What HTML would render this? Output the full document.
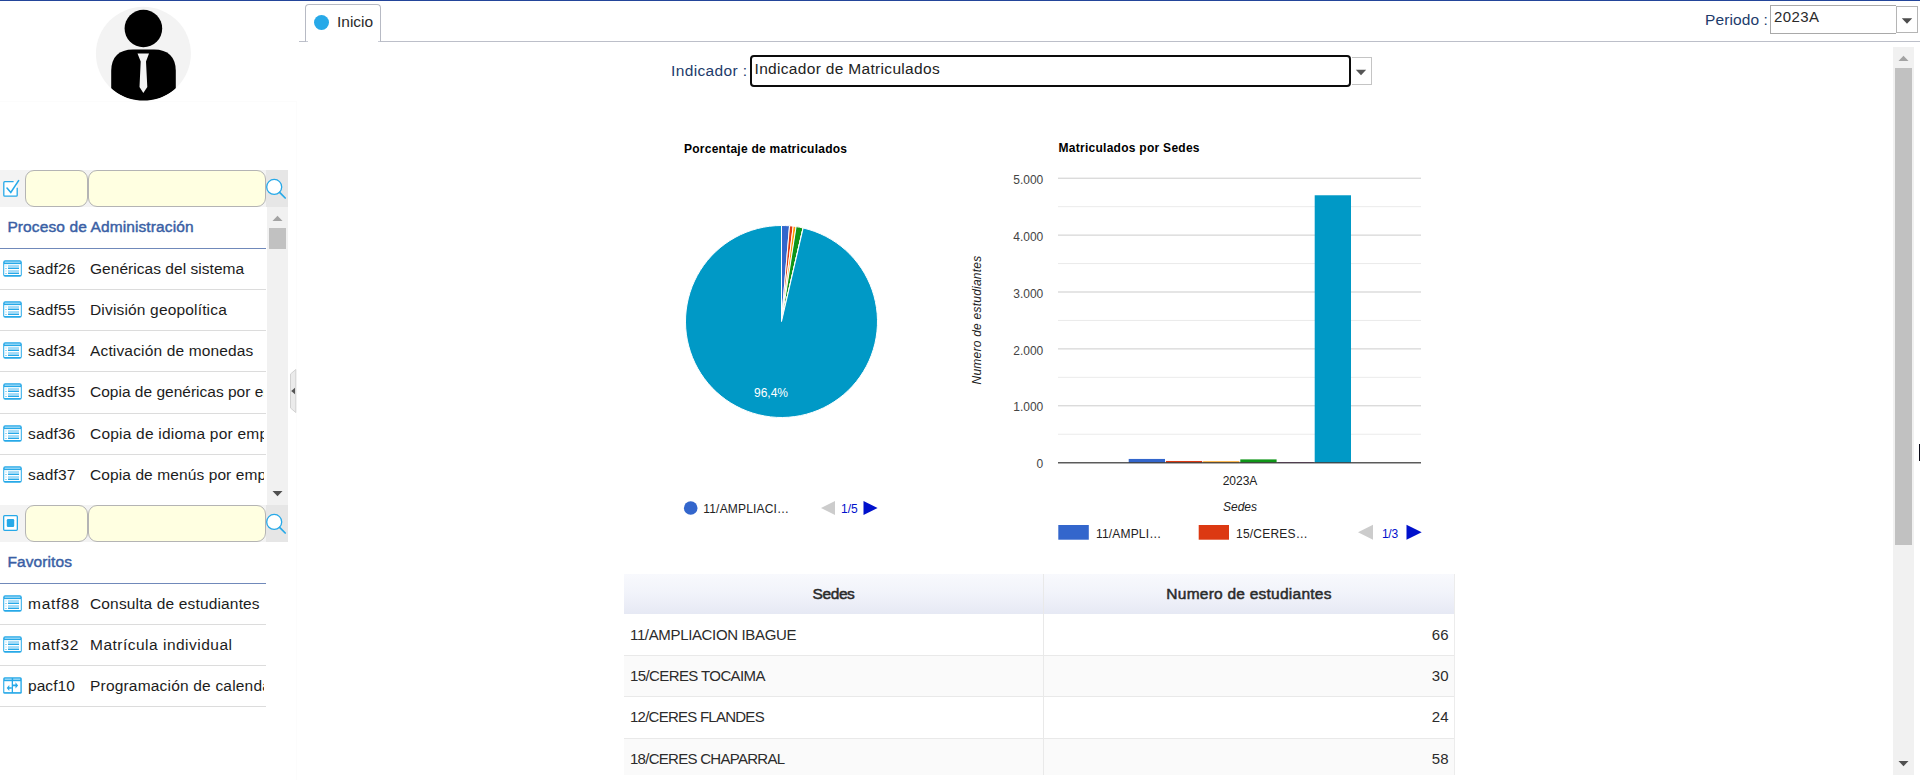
<!DOCTYPE html>
<html lang="es">
<head>
<meta charset="utf-8">
<title>Inicio</title>
<style>
*{box-sizing:border-box;margin:0;padding:0}
html,body{width:1920px;height:780px;overflow:hidden;background:#fff}
body{position:relative;font-family:"Liberation Sans",sans-serif;color:#222;font-size:16px}
.abs{position:absolute}
.t{position:absolute;white-space:nowrap;line-height:20px}
.topline{left:0;top:0;width:1920px;height:1px;background:#23459a}
.tb{left:0;width:288px;height:37px;background:#f3f3f3}
.inp{position:absolute;top:0;height:37px;background:#ffffe1;border:1px solid #b4b4b4;border-radius:9px}
.hdr{left:7.4px;color:#3a5fa5;font-size:15.5px;-webkit-text-stroke:.45px #3a5fa5;letter-spacing:.11px}
.hline{left:0;width:266px;height:1px;background:#7089ba}
.row{left:0;width:266px;height:41px;border-bottom:1px solid #dcdcdc;overflow:hidden;white-space:nowrap}
.row .ic{position:absolute;left:3px;top:11px;width:19px;height:17px}
.row .cd{position:absolute;left:28px;top:10px;font-size:15.5px;line-height:20px;color:#1c1c1c;letter-spacing:.15px}
.row .nm{position:absolute;left:90px;top:10px;width:174.3px;overflow:hidden;font-size:15.5px;line-height:20px;color:#1c1c1c;letter-spacing:.07px}
.sbv{background:#f1f1f1}
.thumb{background:#c1c1c1}
.th{height:40px;line-height:40px;text-align:center;font-size:15.5px;color:#2b2b2b;white-space:nowrap;-webkit-text-stroke:.5px #2b2b2b}
.tr{left:624px;width:831px;height:41px;border-bottom:1px solid #e9e9e9;white-space:nowrap;font-size:15px;color:#2b2b2b}
.tr .c1{position:absolute;left:6px;top:11px;line-height:20px}
.tr .c2{position:absolute;right:6px;top:11px;line-height:20px;letter-spacing:.3px}
</style>
</head>
<body>
<div class="abs topline"></div>

<!-- avatar -->
<svg class="abs" style="left:95px;top:5px" width="98" height="98" viewBox="0 0 98 98">
  <defs><linearGradient id="gb" x1="0" y1="0" x2="0" y2="1"><stop offset="0" stop-color="#8dd2f5"/><stop offset=".58" stop-color="#b5e2f9"/><stop offset=".72" stop-color="#27a9e8"/><stop offset="1" stop-color="#27a9e8"/></linearGradient><clipPath id="cp"><circle cx="48.5" cy="48.5" r="47.5"/></clipPath></defs>
  <ellipse cx="48.4" cy="48.8" rx="47.5" ry="47" fill="#f3f3f3"/>
  <g clip-path="url(#cp)">
    <circle cx="48.4" cy="23.5" r="18.8" fill="#000"/>
    <path d="M16.2 84 V66 C16.2 52 24 44.6 38 44.6 H59 C73 44.6 80.8 52 80.8 66 V84 C70 93 58 95.6 48.5 95.6 C39 95.6 27 93 16.2 84 Z" fill="#000"/>
    <path d="M42.5 48.5 H54 L51 56.5 L52.3 82 L48.3 88 L44.5 82 L45.7 56.5 Z" fill="#f3f3f3"/>
  </g>
</svg>

<!-- tab strip -->
<div class="abs" style="left:299px;top:41px;width:1621px;height:1px;background:#bcbfc9"></div>
<div class="abs" style="left:305px;top:4px;width:76px;height:38px;border:1px solid #b7bac4;border-bottom:none;border-radius:4px 4px 0 0;background:#fff"></div>
<div class="abs" style="left:306px;top:41px;width:2px;height:1px;background:#c9ccd6"></div><div class="abs" style="left:378px;top:41px;width:2px;height:1px;background:#c9ccd6"></div>
<div class="abs" style="left:314.2px;top:15px;width:15.3px;height:15.3px;border-radius:50%;background:#27a9e8"></div>
<div class="t" style="left:337px;top:12px;font-size:15.5px;color:#2a2a2a">Inicio</div>

<!-- periodo -->
<div class="t" style="left:1705px;top:10px;font-size:15.5px;color:#1d3b6b;letter-spacing:.1px">Periodo :</div>
<div class="abs" style="left:1896px;top:6px;width:22px;height:27px;border:1px solid #b5b5b5;background:#fff"></div>
<div class="abs" style="left:1770px;top:5px;width:126px;height:29px;border:1px solid #a9a9a9;border-right:none;background:#fff"></div>
<div class="t" style="left:1774px;top:7px;font-size:15px;color:#2a2a2a;letter-spacing:.4px">2023A</div>
<svg class="abs" style="left:1901px;top:18px" width="12" height="7" viewBox="0 0 12 7"><path d="M0.8 0.3 H11.2 L6 5.8 Z" fill="#4d4d4d"/></svg>

<!-- left panel -->
<div class="abs" style="left:0;top:101px;width:297px;height:1px;background:#fcfcfc"></div><div class="abs" style="left:296px;top:101px;width:1px;height:679px;background:#fcfcfc"></div>
<div class="abs tb" style="top:170px"><div class="inp" style="left:25px;width:63px"></div><div class="inp" style="left:88px;width:178px"></div><svg class="abs" style="left:2px;top:8px" width="20" height="20" viewBox="0 0 20 20"><rect x="1.8" y="3.7" width="13.4" height="14.5" rx="1" fill="#fff"/><path d="M15.2 9.7 V17.2 Q15.2 18.2 14.2 18.2 H2.8 Q1.8 18.2 1.8 17.2 V4.7 Q1.8 3.7 2.8 3.7 H11.6" fill="none" stroke="#27a9e8" stroke-width="1.3"/><path d="M5 10 L8.8 14.4 L16.6 2.6" fill="none" stroke="#27a9e8" stroke-width="1.6" stroke-linecap="round"/></svg><div class="abs" style="left:266px;top:0;width:22px;height:37px;background:#e6e6e6"></div><svg class="abs" style="left:265px;top:8px" width="23" height="23" viewBox="0 0 23 23"><circle cx="9.2" cy="8.9" r="7.5" fill="#fff" stroke="#27a9e8" stroke-width="1.3"/><path d="M14.6 14.3 L20.2 20" stroke="#27a9e8" stroke-width="1.7" stroke-linecap="round"/></svg></div>
<div class="t hdr" style="top:217px">Proceso de Administración</div>
<div class="abs hline" style="top:248px"></div>
<div class="abs row" style="top:249px;height:41px"><svg class="ic" viewBox="0 0 19 17"><rect x="0.2" y="0.2" width="18.6" height="16.6" rx="2" fill="#27a9e8"/><rect x="1.7" y="1.5" width="15.6" height="1.4" fill="#9ad8f6"/><rect x="1.2" y="4.1" width="16.6" height="10.9" fill="#fff"/><g fill="url(#gb)"><rect x="5" y="5.2" width="11" height="3.8"/><rect x="5" y="10.2" width="11" height="3.8"/></g><g fill="#cdebfa"><rect x="2.1" y="5.4" width="1.8" height="1.2"/><rect x="2.1" y="10.4" width="1.8" height="1.2"/></g><g fill="#8fd3f4"><rect x="2.1" y="8" width="1.8" height="1"/><rect x="2.1" y="13" width="1.8" height="1"/></g></svg><span class="cd" style="letter-spacing:0.15px">sadf26</span><span class="nm" style="letter-spacing:0.04px">Genéricas del sistema</span></div>
<div class="abs row" style="top:290px;height:41px"><svg class="ic" viewBox="0 0 19 17"><rect x="0.2" y="0.2" width="18.6" height="16.6" rx="2" fill="#27a9e8"/><rect x="1.7" y="1.5" width="15.6" height="1.4" fill="#9ad8f6"/><rect x="1.2" y="4.1" width="16.6" height="10.9" fill="#fff"/><g fill="url(#gb)"><rect x="5" y="5.2" width="11" height="3.8"/><rect x="5" y="10.2" width="11" height="3.8"/></g><g fill="#cdebfa"><rect x="2.1" y="5.4" width="1.8" height="1.2"/><rect x="2.1" y="10.4" width="1.8" height="1.2"/></g><g fill="#8fd3f4"><rect x="2.1" y="8" width="1.8" height="1"/><rect x="2.1" y="13" width="1.8" height="1"/></g></svg><span class="cd" style="letter-spacing:0.15px">sadf55</span><span class="nm" style="letter-spacing:0.17px">División geopolítica</span></div>
<div class="abs row" style="top:331px;height:41px"><svg class="ic" viewBox="0 0 19 17"><rect x="0.2" y="0.2" width="18.6" height="16.6" rx="2" fill="#27a9e8"/><rect x="1.7" y="1.5" width="15.6" height="1.4" fill="#9ad8f6"/><rect x="1.2" y="4.1" width="16.6" height="10.9" fill="#fff"/><g fill="url(#gb)"><rect x="5" y="5.2" width="11" height="3.8"/><rect x="5" y="10.2" width="11" height="3.8"/></g><g fill="#cdebfa"><rect x="2.1" y="5.4" width="1.8" height="1.2"/><rect x="2.1" y="10.4" width="1.8" height="1.2"/></g><g fill="#8fd3f4"><rect x="2.1" y="8" width="1.8" height="1"/><rect x="2.1" y="13" width="1.8" height="1"/></g></svg><span class="cd" style="letter-spacing:0.15px">sadf34</span><span class="nm" style="letter-spacing:0.155px">Activación de monedas</span></div>
<div class="abs row" style="top:372px;height:42px"><svg class="ic" viewBox="0 0 19 17"><rect x="0.2" y="0.2" width="18.6" height="16.6" rx="2" fill="#27a9e8"/><rect x="1.7" y="1.5" width="15.6" height="1.4" fill="#9ad8f6"/><rect x="1.2" y="4.1" width="16.6" height="10.9" fill="#fff"/><g fill="url(#gb)"><rect x="5" y="5.2" width="11" height="3.8"/><rect x="5" y="10.2" width="11" height="3.8"/></g><g fill="#cdebfa"><rect x="2.1" y="5.4" width="1.8" height="1.2"/><rect x="2.1" y="10.4" width="1.8" height="1.2"/></g><g fill="#8fd3f4"><rect x="2.1" y="8" width="1.8" height="1"/><rect x="2.1" y="13" width="1.8" height="1"/></g></svg><span class="cd" style="letter-spacing:0.15px">sadf35</span><span class="nm" style="letter-spacing:0.005px">Copia de genéricas por empresa</span></div>
<div class="abs row" style="top:414px;height:41px"><svg class="ic" viewBox="0 0 19 17"><rect x="0.2" y="0.2" width="18.6" height="16.6" rx="2" fill="#27a9e8"/><rect x="1.7" y="1.5" width="15.6" height="1.4" fill="#9ad8f6"/><rect x="1.2" y="4.1" width="16.6" height="10.9" fill="#fff"/><g fill="url(#gb)"><rect x="5" y="5.2" width="11" height="3.8"/><rect x="5" y="10.2" width="11" height="3.8"/></g><g fill="#cdebfa"><rect x="2.1" y="5.4" width="1.8" height="1.2"/><rect x="2.1" y="10.4" width="1.8" height="1.2"/></g><g fill="#8fd3f4"><rect x="2.1" y="8" width="1.8" height="1"/><rect x="2.1" y="13" width="1.8" height="1"/></g></svg><span class="cd" style="letter-spacing:0.15px">sadf36</span><span class="nm" style="letter-spacing:0.22px">Copia de idioma por empresa</span></div>
<div class="abs row" style="top:455px;height:41px"><svg class="ic" viewBox="0 0 19 17"><rect x="0.2" y="0.2" width="18.6" height="16.6" rx="2" fill="#27a9e8"/><rect x="1.7" y="1.5" width="15.6" height="1.4" fill="#9ad8f6"/><rect x="1.2" y="4.1" width="16.6" height="10.9" fill="#fff"/><g fill="url(#gb)"><rect x="5" y="5.2" width="11" height="3.8"/><rect x="5" y="10.2" width="11" height="3.8"/></g><g fill="#cdebfa"><rect x="2.1" y="5.4" width="1.8" height="1.2"/><rect x="2.1" y="10.4" width="1.8" height="1.2"/></g><g fill="#8fd3f4"><rect x="2.1" y="8" width="1.8" height="1"/><rect x="2.1" y="13" width="1.8" height="1"/></g></svg><span class="cd" style="letter-spacing:0.15px">sadf37</span><span class="nm" style="letter-spacing:0.1px">Copia de menús por empresa</span></div>
<div class="abs sbv" style="left:267px;top:207px;width:21px;height:298px"></div>
<div class="abs thumb" style="left:269px;top:228px;width:17px;height:21px"></div>
<svg class="abs" style="left:272px;top:215px" width="11" height="7" viewBox="0 0 11 7"><path d="M0.5 6 L5.5 0.8 L10.5 6 Z" fill="#a3a3a3"/></svg>
<svg class="abs" style="left:272px;top:490px" width="11" height="7" viewBox="0 0 11 7"><path d="M0.5 1 L5.5 6.2 L10.5 1 Z" fill="#505050"/></svg>
<div class="abs" style="left:0;top:495px;width:267px;height:10px;background:#fff"></div>
<div class="abs tb" style="top:505px"><div class="inp" style="left:25px;width:63px"></div><div class="inp" style="left:88px;width:178px"></div><svg class="abs" style="left:3px;top:10px" width="16" height="17" viewBox="0 0 16 17"><rect x="0.65" y="0.65" width="13.7" height="14.7" rx="1" fill="#fff" stroke="#27a9e8" stroke-width="1.3"/><rect x="3.8" y="4.1" width="7.4" height="7.8" rx="1.2" fill="#27a9e8"/></svg><div class="abs" style="left:266px;top:0;width:22px;height:37px;background:#e6e6e6"></div><svg class="abs" style="left:265px;top:8px" width="23" height="23" viewBox="0 0 23 23"><circle cx="9.2" cy="8.9" r="7.5" fill="#fff" stroke="#27a9e8" stroke-width="1.3"/><path d="M14.6 14.3 L20.2 20" stroke="#27a9e8" stroke-width="1.7" stroke-linecap="round"/></svg></div>
<div class="t hdr" style="top:552px">Favoritos</div>
<div class="abs hline" style="top:583px"></div>
<div class="abs row" style="top:584px"><svg class="ic" viewBox="0 0 19 17"><rect x="0.2" y="0.2" width="18.6" height="16.6" rx="2" fill="#27a9e8"/><rect x="1.7" y="1.5" width="15.6" height="1.4" fill="#9ad8f6"/><rect x="1.2" y="4.1" width="16.6" height="10.9" fill="#fff"/><g fill="url(#gb)"><rect x="5" y="5.2" width="11" height="3.8"/><rect x="5" y="10.2" width="11" height="3.8"/></g><g fill="#cdebfa"><rect x="2.1" y="5.4" width="1.8" height="1.2"/><rect x="2.1" y="10.4" width="1.8" height="1.2"/></g><g fill="#8fd3f4"><rect x="2.1" y="8" width="1.8" height="1"/><rect x="2.1" y="13" width="1.8" height="1"/></g></svg><span class="cd" style="letter-spacing:0.73px">matf88</span><span class="nm" style="letter-spacing:0.15px">Consulta de estudiantes</span></div>
<div class="abs row" style="top:625px"><svg class="ic" viewBox="0 0 19 17"><rect x="0.2" y="0.2" width="18.6" height="16.6" rx="2" fill="#27a9e8"/><rect x="1.7" y="1.5" width="15.6" height="1.4" fill="#9ad8f6"/><rect x="1.2" y="4.1" width="16.6" height="10.9" fill="#fff"/><g fill="url(#gb)"><rect x="5" y="5.2" width="11" height="3.8"/><rect x="5" y="10.2" width="11" height="3.8"/></g><g fill="#cdebfa"><rect x="2.1" y="5.4" width="1.8" height="1.2"/><rect x="2.1" y="10.4" width="1.8" height="1.2"/></g><g fill="#8fd3f4"><rect x="2.1" y="8" width="1.8" height="1"/><rect x="2.1" y="13" width="1.8" height="1"/></g></svg><span class="cd" style="letter-spacing:0.59px">matf32</span><span class="nm" style="letter-spacing:0.49px">Matrícula individual</span></div>
<div class="abs row" style="top:666px"><svg class="ic" viewBox="0 0 19 17"><rect x="0.2" y="0.2" width="18.6" height="16.6" rx="1.5" fill="#27a9e8"/><rect x="1.7" y="1.5" width="7" height="1.4" fill="#9ad8f6"/><rect x="10.2" y="1.5" width="7" height="1.4" fill="#9ad8f6"/><rect x="1.3" y="4.2" width="7.4" height="10.9" fill="#fff"/><rect x="10" y="4.2" width="7.4" height="10.9" fill="#fff"/><path d="M3.7 11 L6.3 7.9 V10.2 H8.8 V11.8 H6.3 V14.1 Z M15.1 8.4 L12.5 5.2 V7.6 H9.9 V9.2 H12.5 V11.6 Z" fill="#27a9e8"/></svg><span class="cd" style="letter-spacing:0.05px">pacf10</span><span class="nm" style="letter-spacing:0.19px">Programación de calendarios</span></div>
<svg class="abs" style="left:289px;top:368px" width="8" height="46" viewBox="0 0 8 46"><path d="M1.5 6 L6.8 1.5 V44.5 L1.5 40 Z" fill="#ebebeb" stroke="#d2d2d2" stroke-width="1"/><path d="M2.2 23 L6 19.8 V26.2 Z" fill="#555"/></svg>
<!-- indicador -->
<div class="t" style="left:671px;top:61px;font-size:15.5px;color:#1d3b6b;letter-spacing:.37px">Indicador :</div>
<div class="abs" style="left:750px;top:55px;width:601px;height:32px;border:2px solid #0c0c0c;border-radius:4px;background:#fff"></div>
<div class="t" style="left:754.5px;top:59px;font-size:15.5px;color:#222;letter-spacing:.32px">Indicador de Matriculados</div>
<div class="abs" style="left:1352px;top:57px;width:20px;height:28px;border:1px solid #c4c4c4;border-left:none;background:#fff"></div>
<svg class="abs" style="left:1355px;top:69px" width="12" height="7" viewBox="0 0 12 7"><path d="M0.8 0.8 H11.2 L6 6.2 Z" fill="#555"/></svg>
<!-- charts -->
<svg class="abs" style="left:0;top:0" width="1920" height="780" viewBox="0 0 1920 780" font-family="Liberation Sans, Arial, sans-serif">
<text x="684" y="153" font-size="12" font-weight="bold" fill="#000" letter-spacing=".25">Porcentaje de matriculados</text>
<path d="M781.5,321.5L781.50,225.50A96,96,0,0,1,789.55,225.84Z" fill="#3366cc" stroke="#fff" stroke-width="1"/>
<path d="M781.5,321.5L789.55,225.84A96,96,0,0,1,793.20,226.22Z" fill="#dc3912" stroke="#fff" stroke-width="1"/>
<path d="M781.5,321.5L793.20,226.22A96,96,0,0,1,796.10,226.62Z" fill="#ff9900" stroke="#fff" stroke-width="1"/>
<path d="M781.5,321.5L796.10,226.62A96,96,0,0,1,803.05,227.95Z" fill="#109618" stroke="#fff" stroke-width="1"/>
<path d="M781.5,321.5L803.05,227.95A96,96,0,0,1,803.17,227.98Z" fill="#990099" stroke="#fff" stroke-width="1"/>
<path d="M781.5,321.5L803.17,227.98A96,96,0,1,1,781.50,225.50Z" fill="#0099c6" stroke="#fff" stroke-width="1"/>
<text x="771" y="397" font-size="12" fill="#fff" text-anchor="middle">96,4%</text>
<circle cx="690.7" cy="508" r="6.8" fill="#3366cc"/>
<text x="703.3" y="513" font-size="12" fill="#222" letter-spacing=".18">11/AMPLIACI…</text>
<path d="M821,508L835,501V515Z" fill="#cccccc"/>
<text x="841" y="513" font-size="12" fill="#0011cc">1/5</text>
<path d="M877.6,508L863.5,501V515Z" fill="#0011cc"/>
<text x="1058.5" y="152" font-size="12" font-weight="bold" fill="#000" letter-spacing=".27">Matriculados por Sedes</text>
<rect x="1058" y="206.15" width="363" height="1" fill="#ebebeb"/>
<rect x="1058" y="177.70" width="363" height="1" fill="#cccccc"/>
<text x="1043.3" y="183.8" font-size="12" fill="#444" text-anchor="end">5.000</text>
<rect x="1058" y="263.05" width="363" height="1" fill="#ebebeb"/>
<rect x="1058" y="234.60" width="363" height="1" fill="#cccccc"/>
<text x="1043.3" y="240.7" font-size="12" fill="#444" text-anchor="end">4.000</text>
<rect x="1058" y="319.95" width="363" height="1" fill="#ebebeb"/>
<rect x="1058" y="291.50" width="363" height="1" fill="#cccccc"/>
<text x="1043.3" y="297.6" font-size="12" fill="#444" text-anchor="end">3.000</text>
<rect x="1058" y="376.85" width="363" height="1" fill="#ebebeb"/>
<rect x="1058" y="348.40" width="363" height="1" fill="#cccccc"/>
<text x="1043.3" y="354.5" font-size="12" fill="#444" text-anchor="end">2.000</text>
<rect x="1058" y="433.75" width="363" height="1" fill="#ebebeb"/>
<rect x="1058" y="405.30" width="363" height="1" fill="#cccccc"/>
<text x="1043.3" y="411.4" font-size="12" fill="#444" text-anchor="end">1.000</text>
<text x="1043.3" y="468.3" font-size="12" fill="#444" text-anchor="end">0</text>
<rect x="1128.7" y="458.94" width="36.3" height="3.76" fill="#3366cc"/>
<rect x="1165.9" y="460.99" width="36.3" height="1.71" fill="#dc3912"/>
<rect x="1203.1" y="461.33" width="36.3" height="1.37" fill="#ff9900"/>
<rect x="1240.3" y="459.40" width="36.3" height="3.30" fill="#109618"/>
<rect x="1277.5" y="462.13" width="36.3" height="0.57" fill="#990099"/>
<rect x="1314.7" y="195.27" width="36.3" height="267.43" fill="#0099c6"/>
<rect x="1058" y="462.2" width="363" height="1.2" fill="#333"/>
<text x="1240" y="485" font-size="12" fill="#222" text-anchor="middle">2023A</text>
<text x="1240" y="511" font-size="12" fill="#222" font-style="italic" text-anchor="middle">Sedes</text>
<text transform="translate(980.5,320) rotate(-90)" font-size="12" fill="#222" font-style="italic" text-anchor="middle" letter-spacing=".23">Numero de estudiantes</text>
<rect x="1058.3" y="525" width="30.5" height="14.7" fill="#3366cc"/>
<text x="1096" y="538" font-size="12" fill="#222" letter-spacing=".17">11/AMPLI…</text>
<rect x="1198.7" y="525" width="30.3" height="14.7" fill="#dc3912"/>
<text x="1236" y="538" font-size="12" fill="#222" letter-spacing=".22">15/CERES…</text>
<path d="M1358,532.3L1373,524.8V539.8Z" fill="#cccccc"/>
<text x="1382" y="538" font-size="12" fill="#0011cc" letter-spacing="-.3">1/3</text>
<path d="M1421.7,532.3L1406.5,524.8V539.8Z" fill="#0011cc"/>
</svg>
<!-- table -->
<div class="abs" style="left:624px;top:574px;width:831px;height:40px;background:linear-gradient(#f8f9fd 0%,#f1f3fa 50%,#e6e9f4 100%)"></div>
<div class="abs th" style="left:624px;top:574px;width:419px;letter-spacing:-.4px">Sedes</div>
<div class="abs th" style="left:1043px;top:574px;width:412px;letter-spacing:.24px">Numero de estudiantes</div>
<div class="abs tr" style="top:614px;height:42px;background:#fff"><span class="c1" style="top:11px;letter-spacing:-0.35px">11/AMPLIACION IBAGUE</span><span class="c2" style="top:11px">66</span></div>
<div class="abs tr" style="top:656px;height:41px;background:#fafafa"><span class="c1" style="top:10px;letter-spacing:-0.6px">15/CERES TOCAIMA</span><span class="c2" style="top:10px">30</span></div>
<div class="abs tr" style="top:697px;height:42px;background:#fff"><span class="c1" style="top:10px;letter-spacing:-0.75px">12/CERES FLANDES</span><span class="c2" style="top:10px">24</span></div>
<div class="abs tr" style="top:739px;height:42px;background:#fafafa"><span class="c1" style="top:10px;letter-spacing:-0.72px">18/CERES CHAPARRAL</span><span class="c2" style="top:10px">58</span></div>
<div class="abs" style="left:1043px;top:574px;width:1px;height:206px;background:#e9e9e9"></div>
<div class="abs" style="left:1454px;top:574px;width:1px;height:206px;background:#ececec"></div>
<div class="abs" style="left:298px;top:775px;width:1622px;height:5px;background:#fff"></div>
<!-- page scrollbar -->
<div class="abs sbv" style="left:1893px;top:47px;width:21px;height:728px"></div>
<div class="abs thumb" style="left:1895px;top:68px;width:17px;height:477px"></div>
<svg class="abs" style="left:1898px;top:55px" width="11" height="7" viewBox="0 0 11 7"><path d="M0.5 6 L5.5 0.8 L10.5 6 Z" fill="#a3a3a3"/></svg>
<svg class="abs" style="left:1898px;top:760px" width="11" height="7" viewBox="0 0 11 7"><path d="M0.5 1 L5.5 6.2 L10.5 1 Z" fill="#505050"/></svg>
<div class="abs" style="left:1919px;top:444px;width:1px;height:17px;background:#0b0b18"></div>
</body>
</html>
